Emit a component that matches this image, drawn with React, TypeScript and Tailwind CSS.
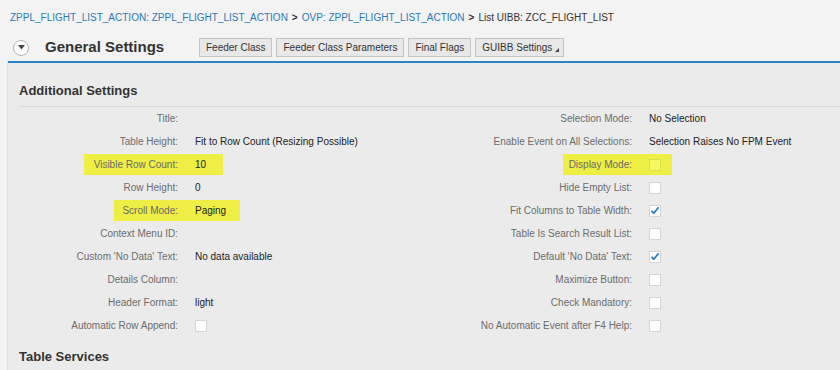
const font = { fontFamily: '"Liberation Sans", Arial, sans-serif' }

type Row = {
  label: string
  value?: string
  check?: boolean
  checked?: boolean
  mark?: [number, number]
}

const leftRows: Row[] = [
  { label: 'Title:' },
  { label: 'Table Height:', value: 'Fit to Row Count (Resizing Possible)' },
  { label: 'Visible Row Count:', value: '10', mark: [10, 17] },
  { label: 'Row Height:', value: '0' },
  { label: 'Scroll Mode:', value: 'Paging', mark: [8, 14] },
  { label: 'Context Menu ID:' },
  { label: "Custom 'No Data' Text:", value: 'No data available' },
  { label: 'Details Column:' },
  { label: 'Header Format:', value: 'light' },
  { label: 'Automatic Row Append:', check: true },
]

const rightRows: Row[] = [
  { label: 'Selection Mode:', value: 'No Selection' },
  { label: 'Enable Event on All Selections:', value: 'Selection Raises No FPM Event' },
  { label: 'Display Mode:', check: true, mark: [6, 11] },
  { label: 'Hide Empty List:', check: true },
  { label: 'Fit Columns to Table Width:', check: true, checked: true },
  { label: 'Table Is Search Result List:', check: true },
  { label: "Default 'No Data' Text:", check: true, checked: true },
  { label: 'Maximize Button:', check: true },
  { label: 'Check Mandatory:', check: true },
  { label: 'No Automatic Event after F4 Help:', check: true },
]

function Checkbox({ checked, marked }: { checked?: boolean; marked?: boolean }) {
  return (
    <span
      className={`flex h-[12px] w-[12px] items-center justify-center border ${
        marked ? 'bg-[#f6f65e] border-[#dede55]' : 'bg-white border-[#d4d4d4]'
      }`}
    >
      {checked && (
        <svg width="10" height="9" viewBox="0 0 10 9">
          <path d="M1.5 4.8 L3.8 7.2 L8.6 1.2" fill="none" stroke="#2b7cc0" strokeWidth="1.8" />
        </svg>
      )}
    </span>
  )
}

function Field({ row, labelWidth }: { row: Row; labelWidth: string }) {
  const hl = row.mark ? 'bg-[#eeee44]' : ''
  return (
    <div className="flex h-[23px] items-center">
      <div className={`${labelWidth} flex shrink-0 justify-end`}>
        <span
          className={`flex h-[21px] items-center pr-[17px] text-[#6b6b6b] ${hl}`}
          style={row.mark ? { paddingLeft: row.mark[0] } : undefined}
        >
          {row.label}
        </span>
      </div>
      {(row.value || row.check) && (
        <span
          className={`flex h-[21px] items-center text-[#222] ${hl}`}
          style={row.mark ? { paddingRight: row.mark[1] } : undefined}
        >
          {row.check ? <Checkbox checked={row.checked} marked={!!row.mark} /> : row.value}
        </span>
      )}
    </div>
  )
}

function Btn({ children, menu }: { children: string; menu?: boolean }) {
  return (
    <button
      className={`relative h-[19px] border border-[#c4c4c4] bg-[#e8e8e8] pl-[6px] text-[10px] leading-none text-[#333] ${
        menu ? 'pr-[11px]' : 'pr-[6px]'
      }`}
    >
      {children}
      {menu && (
        <svg className="absolute bottom-[4px] right-[4px]" width="4" height="4" viewBox="0 0 4 4">
          <path d="M4 0 L4 4 L0 4 Z" fill="#444" />
        </svg>
      )}
    </button>
  )
}

export default function App() {
  return (
    <div className="h-[370px] w-[840px] overflow-hidden bg-[#f3f3f3] text-[10px]" style={font}>
      <div className="flex h-[34px] items-center gap-[4px] pl-[10px] pt-[1px] text-[10px]">
        <span className="text-[#2a7ab8]">ZPPL_FLIGHT_LIST_ACTION: ZPPL_FLIGHT_LIST_ACTION</span>
        <span className="font-bold text-[#333]">&gt;</span>
        <span className="text-[#2a7ab8]">OVP: ZPPL_FLIGHT_LIST_ACTION</span>
        <span className="font-bold text-[#333]">&gt;</span>
        <span className="text-[#333]">List UIBB: ZCC_FLIGHT_LIST</span>
      </div>

      <div className="flex h-[27px] items-center">
        <span className="ml-[13px] flex h-[16px] w-[16px] items-center justify-center rounded-full border border-[#b5b5b5] bg-white">
          <svg width="7" height="5" viewBox="0 0 7 5">
            <path d="M0 0 L7 0 L3.5 4.5 Z" fill="#444" />
          </svg>
        </span>
        <span className="ml-[16px] w-[154px] text-[15px] font-bold text-[#333]">General Settings</span>
        <div className="flex gap-[4px]">
          <Btn>Feeder Class</Btn>
          <Btn>Feeder Class Parameters</Btn>
          <Btn>Final Flags</Btn>
          <Btn menu>GUIBB Settings</Btn>
        </div>
      </div>

      <div className="ml-[7px] h-[309px] border-l border-[#e2e2e2]">
        <div className="h-[2px] bg-[#2a84c4]" />
        <div className="h-[307px] bg-[#ebebeb]">
          <div className="pl-[11px] pt-[20px] text-[13px] font-bold leading-[16px] text-[#333]">
            Additional Settings
          </div>
          <div className="ml-[11px] mt-[7px] h-px bg-[#d9d9d9]" />
          <div className="flex">
            <div className="w-[432px]">
              {leftRows.map((r) => (
                <Field key={r.label} row={r} labelWidth="w-[187px]" />
              ))}
            </div>
            <div>
              {rightRows.map((r) => (
                <Field key={r.label} row={r} labelWidth="w-[209px]" />
              ))}
            </div>
          </div>
          <div className="mt-[12px] pl-[11px] text-[13px] font-bold leading-[16px] text-[#333]">
            Table Services
          </div>
        </div>
      </div>
    </div>
  )
}
